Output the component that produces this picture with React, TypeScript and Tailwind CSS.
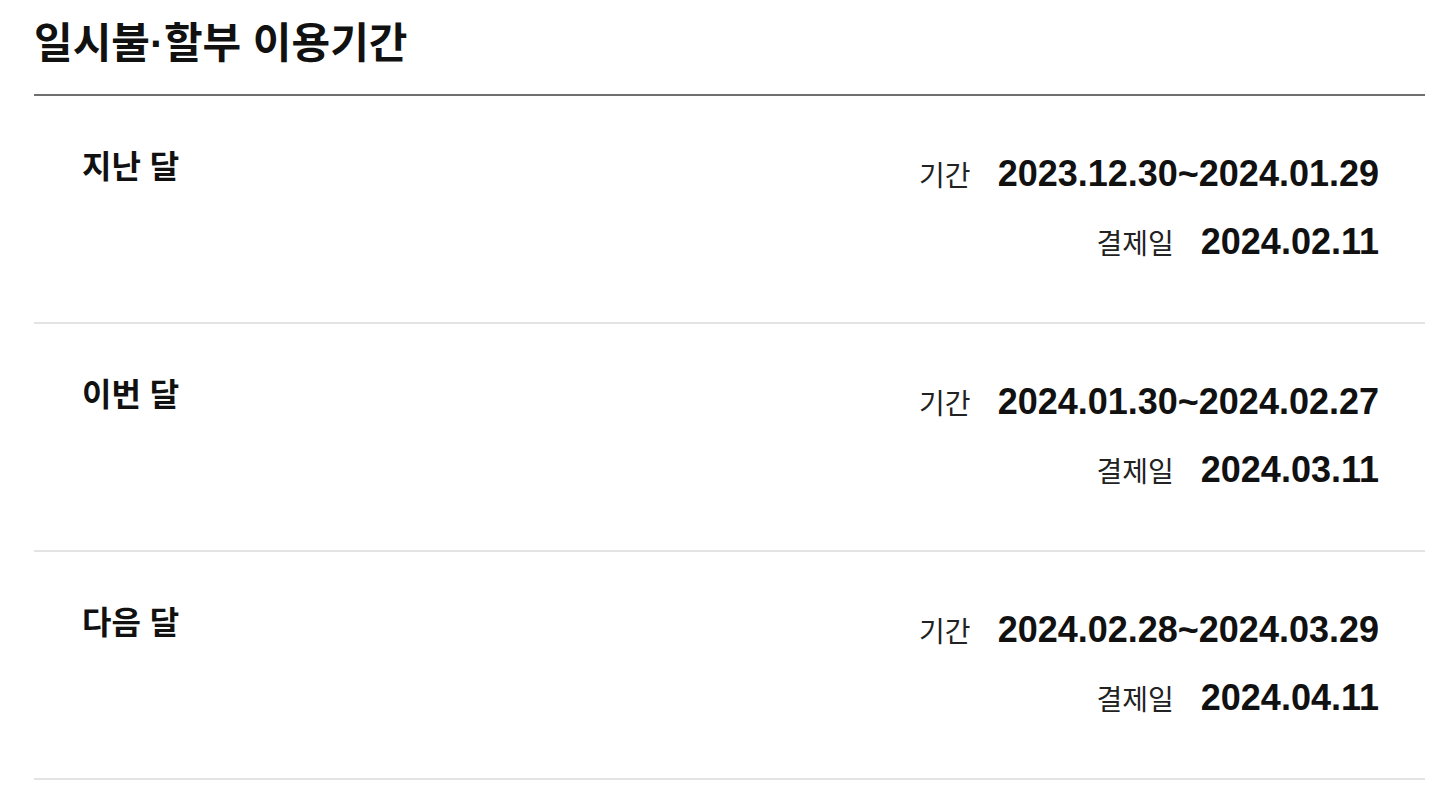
const periods = [
  { name: "지난 달", range: "2023.12.30~2024.01.29", payDay: "2024.02.11" },
  { name: "이번 달", range: "2024.01.30~2024.02.27", payDay: "2024.03.11" },
  { name: "다음 달", range: "2024.02.28~2024.03.29", payDay: "2024.04.11" },
];

export default function App() {
  return (
    <div
      className="min-h-screen bg-white pl-[34px] pr-[21px] text-[#111]"
      style={{ fontFamily: '"Liberation Sans", "Noto Sans CJK KR", sans-serif' }}
    >
      {/* Title */}
      <div className="border-b-2 border-[#6f6f6f] pt-[13px] pb-[19px]">
        <h1 className="text-[42px] font-bold leading-[62px]">일시불·할부 이용기간</h1>
      </div>

      {/* Period rows */}
      {periods.map((p) => (
        <div
          key={p.name}
          className="flex items-start justify-between border-b-2 border-[#e3e3e3] pl-12 pr-[46px] pt-[54px] pb-[56px]"
        >
          <div className="text-[32px] font-bold leading-[34px]">{p.name}</div>
          <div className="flex flex-col items-end gap-[20px]">
            <div className="flex h-[48px] items-baseline leading-[48px]">
              <span className="text-[28px] text-[#222]">기간</span>
              <span className="ml-[27px] text-[36px] font-bold">{p.range}</span>
            </div>
            <div className="flex h-[48px] items-baseline leading-[48px]">
              <span className="text-[28px] text-[#222]">결제일</span>
              <span className="ml-[27px] text-[36px] font-bold">{p.payDay}</span>
            </div>
          </div>
        </div>
      ))}
    </div>
  );
}
